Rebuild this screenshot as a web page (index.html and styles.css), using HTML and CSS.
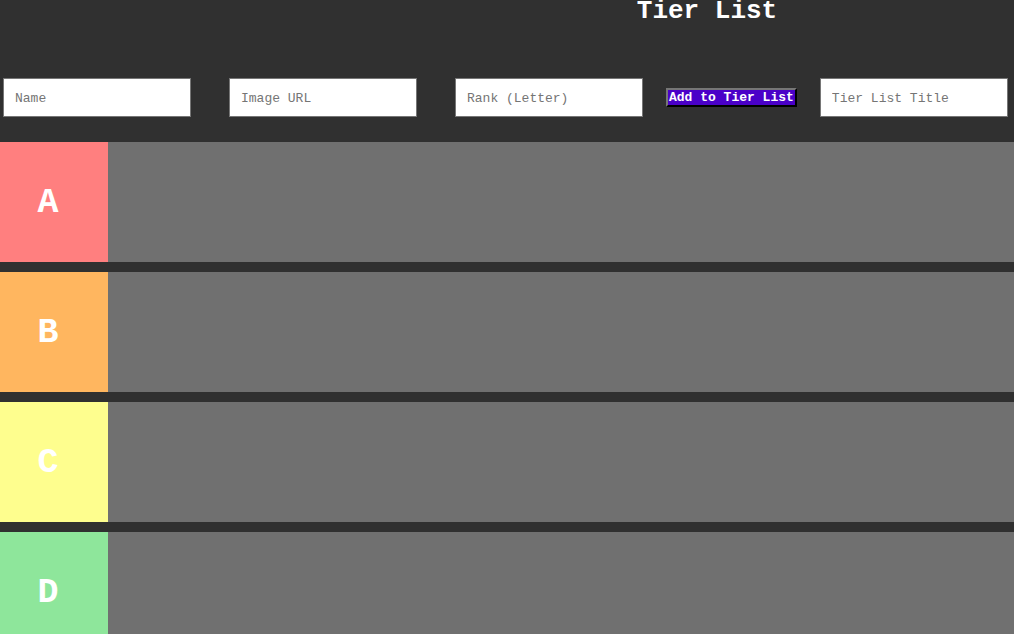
FILE: index.html
```html
<!DOCTYPE html>
<html>
<head>
<meta charset="utf-8">
<link rel="stylesheet" href="styles.css">
</head>
<body>
<header class="header">
  <h1 class="title">Tier List</h1>
  <div class="controls">
    <input class="field" type="text" placeholder="Name">
    <input class="field" type="text" placeholder="Image URL">
    <input class="field" type="text" placeholder="Rank (Letter)">
    <button class="add-btn">Add to Tier List</button>
    <input class="field" type="text" placeholder="Tier List Title">
  </div>
</header>
<main class="tiers">
  <div class="tier"><div class="label label-a">A</div><div class="items"></div></div>
  <div class="tier"><div class="label label-b">B</div><div class="items"></div></div>
  <div class="tier"><div class="label label-c">C</div><div class="items"></div></div>
  <div class="tier"><div class="label label-d">D</div><div class="items"></div></div>
</main>
</body>
</html>
```
FILE: styles.css
```css
html, body {
  margin: 0;
  padding: 0;
  background: #303030;
  font-family: "Liberation Mono", "Courier New", monospace;
}
.header {
  display: flex;
  flex-direction: column;
}
.title {
  margin: 0;
  box-sizing: border-box;
  height: 78px;
  padding-top: 4px;
  padding-left: 400px;
  text-align: center;
  color: #ffffff;
  font-size: 26px;
  font-weight: bold;
  line-height: 14px;
}
.controls {
  display: flex;
  align-items: center;
  height: 39px;
  padding-left: 3px;
}
.field {
  box-sizing: border-box;
  width: 188px;
  height: 39px;
  margin: 0 38px 0 0;
  padding: 2px 11px 0;
  border: 1px solid #767676;
  background: #ffffff;
  font-family: "Liberation Mono", "Courier New", monospace;
  font-size: 13px;
  color: #333;
}
.field::placeholder {
  color: #757575;
}
.controls .field:nth-of-type(3) {
  margin-right: 23px;
}
.controls .field:last-child {
  margin-right: 0;
}
.add-btn {
  box-sizing: border-box;
  height: 19px;
  margin: 0 23px 0 0;
  padding: 0 1px;
  border: 2px outset #767676;
  border-right-color: #222;
  border-bottom-color: #222;
  background: #4a00c8;
  color: #ffffff;
  font-family: "Liberation Mono", "Courier New", monospace;
  font-size: 13px;
  font-weight: bold;
  line-height: 15px;
  white-space: nowrap;
}
.tiers {
  display: flex;
  flex-direction: column;
  gap: 10px;
  margin-top: 25px;
}
.tier {
  display: flex;
  height: 120px;
  background: #707070;
}
.label {
  box-sizing: border-box;
  width: 108px;
  padding-right: 12px;
  padding-top: 2px;
  display: flex;
  align-items: center;
  justify-content: center;
  color: #ffffff;
  font-size: 35px;
  font-weight: bold;
}
.items {
  flex: 1;
}
.label-a { background: #ff7f7f; }
.label-b { background: #ffb65f; }
.label-c { background: #fefe8e; }
.label-d { background: #8ee69b; }
```
